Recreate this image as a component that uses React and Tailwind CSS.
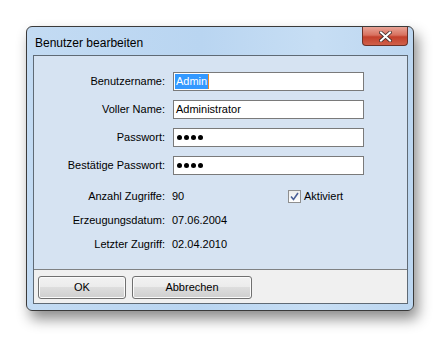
function PasswordDots() {
    return (
        <div className="flex items-center gap-[2px] pl-[3px]">
            <span className="w-[5px] h-[5px] rounded-full bg-black" />
            <span className="w-[5px] h-[5px] rounded-full bg-black" />
            <span className="w-[5px] h-[5px] rounded-full bg-black" />
            <span className="w-[5px] h-[5px] rounded-full bg-black" />
        </div>
    )
}

function FieldRow({ label, children }) {
    return (
        <div className="flex items-center h-[19px]">
            <div className="w-[132px] pr-[1px] text-right">{label}</div>
            <div className="ml-[7px] w-[191px] h-[19px] bg-white border border-[#7a7a7a] flex items-center">
                {children}
            </div>
        </div>
    )
}

function InfoRow({ label, value, extra }) {
    return (
        <div className="flex items-center h-[24px]">
            <div className="w-[132px] pr-[1px] text-right">{label}</div>
            <div className="ml-[6px] w-[116px]">{value}</div>
            {extra}
        </div>
    )
}

function WinButton({ children, width }) {
    return (
        <div className={`${width} h-[23px] rounded-[3px] border border-[#707070] bg-[linear-gradient(#f2f2f2_0%,#ebebeb_50%,#dddddd_50%,#cfcfcf_100%)] shadow-[inset_0_0_0_1px_#fbfbfb] flex items-center justify-center`}>
            {children}
        </div>
    )
}

export default function App() {
    return (
        <div className="w-[441px] h-[338px] bg-white pt-[26px] pl-[26px] text-[11px] text-black font-['Liberation_Sans',Arial,sans-serif]">

            <div className="w-[388px] h-[285px] rounded-[6px] border border-[#3a3a3a] pl-[6px] pr-[5px] pb-[6px] flex flex-col bg-[linear-gradient(90deg,#c3dbf3_0%,#b9d5f1_45%,#c7def4_75%,#bcd6f0_100%)] shadow-[4px_8px_14px_rgba(0,0,0,0.45)]">

                <div className="h-[28px] flex justify-between">
                    <div className="pl-[2px] pt-[7px] text-[12px] text-black">
                        Benutzer bearbeiten
                    </div>
                    <div className="w-[46px] h-[19px] rounded-b-[4px] border border-t-0 border-[#6b3128] bg-[linear-gradient(#e8a396_0%,#d8715f_45%,#c3402c_55%,#d0604a_100%)] flex items-center justify-center">
                        <svg width="13" height="11" viewBox="0 0 13 11">
                            <path d="M2 1.5 L11 9.5 M11 1.5 L2 9.5" stroke="#3b2a28" strokeWidth="3.6" strokeLinecap="square" />
                            <path d="M2 1.5 L11 9.5 M11 1.5 L2 9.5" stroke="#ffffff" strokeWidth="2" strokeLinecap="square" />
                        </svg>
                    </div>
                </div>

                <div className="flex-1 border border-[#5f6a75] flex flex-col">

                    <div className="h-[213px] bg-[#d6e3f2] pt-[16px] flex flex-col">
                        <div className="flex flex-col gap-[9px]">
                            <FieldRow label="Benutzername:">
                                <span className="ml-[1px] px-[1px] bg-[#3399ff] text-white border-r border-[#f08a24] leading-[15px]">Admin</span>
                            </FieldRow>
                            <FieldRow label="Voller Name:">
                                <span className="pl-[2px]">Administrator</span>
                            </FieldRow>
                            <FieldRow label="Passwort:">
                                <PasswordDots />
                            </FieldRow>
                            <FieldRow label="Bestätige Passwort:">
                                <PasswordDots />
                            </FieldRow>
                        </div>

                        <div className="mt-[9px] flex flex-col">
                            <InfoRow
                                label="Anzahl Zugriffe:"
                                value="90"
                                extra={
                                    <div className="flex items-center gap-[3px]">
                                        <div className="w-[13px] h-[13px] border border-[#8f8f8f] bg-[linear-gradient(#ececec,#ffffff)] flex items-center justify-center">
                                            <svg width="9" height="9" viewBox="0 0 9 9">
                                                <path d="M1 4.5 L3.5 7.5 L8 1" fill="none" stroke="#4a5f97" strokeWidth="1.6" />
                                            </svg>
                                        </div>
                                        <span>Aktiviert</span>
                                    </div>
                                }
                            />
                            <InfoRow label="Erzeugungsdatum:" value="07.06.2004" />
                            <InfoRow label="Letzter Zugriff:" value="02.04.2010" />
                        </div>
                    </div>

                    <div className="flex-1 border-t border-[#7f8183] bg-[#f0f0f0] pl-[4px] pt-[6px] flex gap-[6px]">
                        <WinButton width="w-[88px]">OK</WinButton>
                        <WinButton width="w-[120px]">Abbrechen</WinButton>
                    </div>

                </div>

            </div>

        </div>
    )
}
